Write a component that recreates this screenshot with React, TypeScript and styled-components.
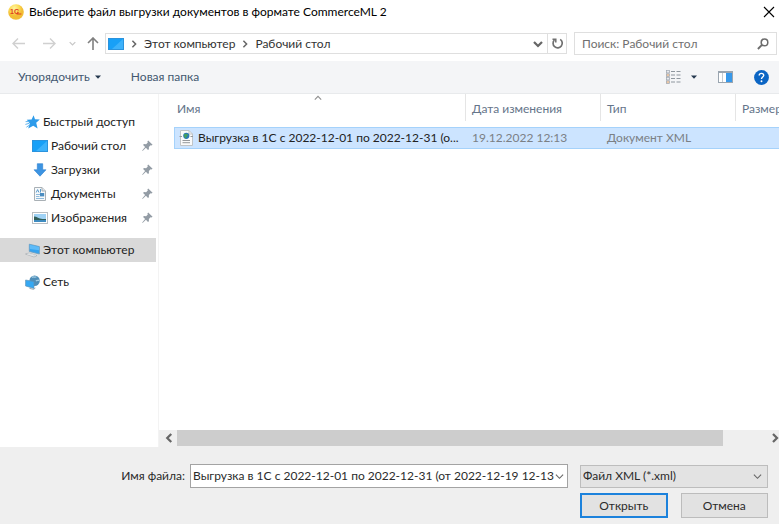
import React from "react";
import styled, { createGlobalStyle } from "styled-components";

const GlobalStyle = createGlobalStyle`
  * { box-sizing: border-box; }
  body { margin: 0; background: #fff; }
  body, button, input, select {
    font-family: Lato, "Noto Sans", sans-serif;
    font-size: 12px;
    line-height: 16px;
    color: #2b2b2b;
  }
  svg { display: block; flex: none; }
`;

const Dialog = styled.div`
  display: flex;
  flex-direction: column;
  min-height: 100vh;
  overflow: hidden;
`;

const PlainButton = styled.button`
  display: flex;
  align-items: center;
  justify-content: center;
  padding: 0;
  border: 0;
  background: none;
  cursor: default;
`;

const TitleBar = styled.header`
  display: flex;
  align-items: center;
  gap: 5px;
  height: 24px;
  padding: 0 4px 0 8px;
`;

const Title = styled.h1`
  flex: 1;
  margin: 0;
  font-size: 12px;
  font-weight: 400;
  color: #000;
  white-space: nowrap;
`;

const NavBar = styled.nav`
  display: flex;
  align-items: center;
  height: 37px;
  padding: 2px 2px 0 12px;
`;

const NavButton = styled(PlainButton)<{ $width: number }>`
  width: ${(p) => p.$width}px;
  height: 20px;
  justify-content: flex-start;
`;

const AddressBar = styled.div`
  display: flex;
  align-items: center;
  flex: 1;
  min-width: 0;
  height: 21px;
  border: 1px solid #dfdfdf;
  padding-left: 2px;
`;

const Crumb = styled(PlainButton)`
  color: #333;
  white-space: nowrap;
`;

const CrumbArrow = styled.span`
  padding: 0 6px 0 6px;
`;

const AddressSpacer = styled.span`
  flex: 1;
`;

const AddressAction = styled(PlainButton)<{ $divided?: boolean }>`
  width: 19px;
  height: 19px;
  border-left: ${(p) => (p.$divided ? "1px solid #dfdfdf" : "0")};
`;

const SearchBox = styled.label`
  display: flex;
  align-items: center;
  width: 203px;
  height: 23px;
  margin-left: 7px;
  padding: 0 7px;
  border: 1px solid #dfdfdf;
`;

const SearchInput = styled.input`
  flex: 1;
  min-width: 0;
  padding: 0;
  border: 0;
  outline: 0;
  background: none;
  &::placeholder { color: #707070; opacity: 1; }
`;

const Toolbar = styled.div`
  display: flex;
  align-items: center;
  height: 33px;
  padding: 0 10px 0 18px;
  background: #f4f5f7;
  border-bottom: 1px solid #e8eaec;
`;

const ToolbarButton = styled(PlainButton)`
  gap: 5px;
  margin-right: 30px;
  color: #435870;
`;

const ToolbarIcons = styled.div`
  display: flex;
  align-items: center;
  gap: 21px;
  margin-left: auto;
`;

const ViewButton = styled(PlainButton)`
  gap: 10px;
`;

const Main = styled.div`
  display: flex;
  flex: 1;
`;

const Sidebar = styled.aside`
  width: 159px;
  flex: none;
  padding: 16px 2px 0 0;
  border-right: 1px solid #f3f3f3;
`;

const TreeList = styled.ul`
  margin: 0 0 8px;
  padding: 0;
  list-style: none;
`;

const TreeItem = styled.li<{ $nested?: boolean; $selected?: boolean }>`
  display: flex;
  align-items: center;
  gap: 3px;
  height: 24px;
  padding: 0 3px 0 ${(p) => (p.$nested ? 32 : 25)}px;
  background: ${(p) => (p.$selected ? "#d9d9d9" : "transparent")};
`;

const TreeLink = styled.a`
  flex: 1;
  color: #222;
  text-decoration: none;
  white-space: nowrap;
`;

const FilePane = styled.section`
  display: flex;
  flex-direction: column;
  flex: 1;
  min-width: 0;
  overflow: hidden;
`;

const TableArea = styled.div`
  flex: 1;
  overflow: hidden;
  padding-left: 15px;
`;

const FileTable = styled.table`
  width: 100%;
  min-width: 660px;
  table-layout: fixed;
  border-collapse: separate;
  border-spacing: 0;
  tbody::before { content: ""; display: block; height: 6px; }
`;

const HeadCell = styled.th<{ $width?: number; $first?: boolean }>`
  width: ${(p) => (p.$width ? `${p.$width}px` : "auto")};
  height: 27px;
  padding: 2px 0 0 ${(p) => (p.$first ? 3 : 6)}px;
  border-right: 1px solid #e5e5e5;
  position: relative;
  text-align: left;
  font-weight: 400;
  color: #65758a;
`;

const SortMark = styled.span`
  position: absolute;
  top: 0;
  left: 0;
  right: 4px;
  display: flex;
  justify-content: center;
`;

const FileCell = styled.td<{ $first?: boolean }>`
  height: 22px;
  padding: 0 0 0 ${(p) => (p.$first ? 4 : 6)}px;
  background: #cce4ff;
  border: solid #a5d2fb;
  border-width: 1px 0 1px ${(p) => (p.$first ? 1 : 0)}px;
  color: ${(p) => (p.$first ? "#222" : "#7b8085")};
  white-space: nowrap;
`;

const FileName = styled.span`
  display: flex;
  align-items: center;
  gap: 4px;
`;

const ScrollBar = styled.div`
  display: flex;
  height: 17px;
  padding: 0 0 1px 1px;
  background: #efefef;
`;

const ScrollButton = styled(PlainButton)<{ $width: number }>`
  width: ${(p) => p.$width}px;
  flex: none;
`;

const ScrollTrack = styled.div`
  flex: 1;
`;

const ScrollThumb = styled.div`
  width: 92%;
  height: 16px;
  background: #cdcdcd;
`;

const Footer = styled.form`
  display: grid;
  grid-template-columns: 185px 1fr 188px;
  column-gap: 5px;
  row-gap: 5px;
  align-items: center;
  padding: 17px 11px 6px 0;
  background: #efefef;
`;

const FieldLabel = styled.label`
  text-align: right;
  white-space: nowrap;
`;

const NameCombo = styled.div`
  display: flex;
  height: 24px;
  margin-right: 7px;
  border: 1px solid #a3a3a3;
  background: #fff;
`;

const NameInput = styled.input`
  flex: 1;
  min-width: 0;
  padding: 0 0 0 2px;
  border: 0;
  outline: 0;
  background: none;
`;

const ComboButton = styled(PlainButton)`
  width: 12px;
  justify-content: flex-start;
`;

const SelectBox = styled.div`
  display: grid;
  align-items: center;
  height: 23px;
  border: 1px solid #bdbdbd;
  background: #e3e3e3;
  & > * { grid-area: 1 / 1; }
  & > svg { justify-self: end; margin-right: 5px; pointer-events: none; }
`;

const TypeSelect = styled.select`
  appearance: none;
  width: 100%;
  height: 20px;
  padding: 0 18px 0 2px;
  border: 0;
  outline: 0;
  background: none;
`;

const Actions = styled.div`
  grid-column: 3;
  display: grid;
  grid-template-columns: 1fr 1fr;
  gap: 13px;
`;

const ActionButton = styled.button<{ $primary?: boolean }>`
  height: 25px;
  padding: 0;
  border: ${(p) => (p.$primary ? "2px solid #1c82dc" : "1px solid #bcbcbc")};
  background: #e2e2e2;
`;

function Chevron({ dir, size = 8, color = "#666", weight = 1.5 }: { dir: "left" | "right" | "down" | "up"; size?: number; color?: string; weight?: number }) {
  const d = {
    left: "M5.8 0.8 2.6 4 5.8 7.2",
    right: "M2.4 0.8 5.6 4 2.4 7.2",
    down: "M0.8 2.4 4 5.6 7.2 2.4",
    up: "M0.8 5.6 4 2.4 7.2 5.6",
  }[dir];
  return (
    <svg width={size} height={size} viewBox="0 0 8 8" fill="none" stroke={color} strokeWidth={weight}>
      <path d={d} />
    </svg>
  );
}

const LogoText = styled.text`
  font-family: "Liberation Sans", sans-serif;
  font-size: 7px;
  font-weight: 700;
`;

const AppLogo = () => (
  <svg width="16" height="16" viewBox="0 0 16 16">
    <defs>
      <radialGradient id="logo" cx="40%" cy="25%">
        <stop offset="0" stopColor="#fff3a0" />
        <stop offset="0.6" stopColor="#fcdc55" />
        <stop offset="1" stopColor="#f2bd35" />
      </radialGradient>
    </defs>
    <circle cx="8" cy="8" r="7.8" fill="url(#logo)" />
    <LogoText x="2" y="10" fill="#e0401f">1С</LogoText>
    <path d="M8.5 10H13.4M9 8.2H10.4" stroke="#e0401f" strokeWidth="1.1" />
  </svg>
);

const Arrow = ({ dir, color }: { dir: "left" | "right" | "up"; color: string }) => (
  <svg width="13" height="13" viewBox="0 0 13 13" fill="none" stroke={color} strokeWidth="1.4">
    {dir === "left" && <path d="M13 6.5H1M6 1.5 1 6.5 6 11.5" />}
    {dir === "right" && <path d="M0 6.5H12M7 1.5 12 6.5 7 11.5" />}
    {dir === "up" && <path d="M6 13V1M1 6 6 1 11 6" strokeWidth="1.6" />}
  </svg>
);

const DesktopIcon = () => (
  <svg width="16" height="12" viewBox="0 0 16 12">
    <rect x="0.5" y="0.5" width="15" height="11" fill="#18a0f7" stroke="#2b93dd" />
    <path d="M15 1V11H4Z" fill="#3db2fb" />
  </svg>
);

const StarIcon = () => (
  <svg width="15" height="14" viewBox="0 0 15 14">
    <path d="M8.6 0.2 10 4.2 14.8 4.6 11.2 7.8 12.6 13.4 8.2 10.8 3.2 13.6 4.8 8.6 1.8 4.8 6.6 4.4Z" fill="#2d9bea" />
    <path d="M0.4 9.4 4 8.4M1.4 12.2 4.6 10M0.6 6.6 4.5 6.6" stroke="#62b5ef" strokeWidth="1" />
  </svg>
);

const DownloadIcon = () => (
  <svg width="16" height="14" viewBox="0 0 16 14">
    <path d="M5.3 0.7H10.7V6.8H14L8 13.2 2 6.8H5.3Z" fill="#3d94e2" stroke="#2a7fd0" strokeWidth="0.6" />
  </svg>
);

const DocumentIcon = () => (
  <svg width="16" height="16" viewBox="0 0 16 16">
    <path d="M2.5 1.5H10L13.5 5V14.5H2.5Z" fill="#f6f9fb" stroke="#a9b0b5" />
    <path d="M10 1.5V5H13.5" fill="#dde3e8" stroke="#a9b0b5" />
    <path d="M4.2 6.5 5.6 3.6 7 6.5M8.5 3V6.5" fill="none" stroke="#5a9bcb" />
    <path d="M4 8.5H8M4 10.5H7.5M4 12.5H12" stroke="#8fbbdc" />
    <rect x="8" y="7" width="4.2" height="3.4" fill="#4a8cc0" />
  </svg>
);

const PictureIcon = () => (
  <svg width="16" height="12" viewBox="0 0 16 12">
    <rect x="0.5" y="0.5" width="15" height="11" fill="#fff" stroke="#b9bec2" />
    <rect x="2" y="2" width="12" height="8" fill="#9fd2f5" />
    <path d="M2 4.4C5 4.4 6 6.2 9 6.7 11 7 12 6.8 14 7V8H2Z" fill="#315e58" />
    <rect x="2" y="8" width="12" height="2" fill="#3f8cc0" />
  </svg>
);

const ComputerIcon = () => (
  <svg width="15" height="15" viewBox="0 0 15 15">
    <path d="M4.3 1.2 14.4 3.6V11L4.3 8.4Z" fill="#35a3ef" stroke="#6c9ec0" strokeWidth="0.8" />
    <path d="M4.8 1.8 14 4V7.2L4.8 6Z" fill="#5ebbf8" />
    <path d="M0.5 11 4 10 12 12.6 9 14Z" fill="#c6ccd0" stroke="#a2a9ae" strokeWidth="0.6" />
    <path d="M2 11 9.5 13.2M3.4 10.4 11 12.6" stroke="#fff" strokeWidth="0.5" />
  </svg>
);

const NetworkIcon = () => (
  <svg width="15" height="15" viewBox="0 0 15 15">
    <circle cx="9.6" cy="5.8" r="5.2" fill="#4f8eb8" />
    <path d="M7 2.4C8.5 1 9.5 3 11.4 1.8M11 6C12 4.8 13 6 14.2 5" stroke="#a4cde4" strokeWidth="1.3" fill="none" />
    <path d="M0.6 5 9 6.6V13.4L0.6 11Z" fill="#35a8f3" stroke="#5f94b8" strokeWidth="0.7" />
    <path d="M4.5 13.4 8.6 14.3 10.4 13" fill="none" stroke="#98a5ae" />
  </svg>
);

const PinIcon = () => (
  <svg width="11" height="12" viewBox="0 0 11 12">
    <path d="M6.2 0.4 10.6 4.8 9.4 5.6 8.6 5.3 6.9 7 6.9 9.2 6 9.9 3.9 7.8 0.6 10.9 0.2 10.5 3.1 7 1.1 5 1.9 4.1 4.1 4.2 5.8 2.4 5.4 1.4Z" fill="#939ca5" />
  </svg>
);

const RefreshIcon = () => (
  <svg width="13" height="13" viewBox="0 0 13 13" fill="none" stroke="#707070" strokeWidth="1.7">
    <path d="M9.2 2.4A4.6 4.6 0 1 1 3.4 3" />
    <path d="M1.5 2.2H4.8V5.4" strokeWidth="1.5" />
  </svg>
);

const SearchIcon = () => (
  <svg width="12" height="12" viewBox="0 0 12 12" fill="none" stroke="#6c6c6c">
    <circle cx="7.5" cy="4.4" r="3.3" strokeWidth="1.5" />
    <path d="M5 6.9 0.9 11" strokeWidth="1.9" />
  </svg>
);

const CaretIcon = () => (
  <svg width="6" height="4" viewBox="0 0 6 4">
    <path d="M0 0.5H6L3 3.7Z" fill="#24384f" />
  </svg>
);

const ListViewIcon = () => (
  <svg width="15" height="14" viewBox="0 0 15 14">
    {[0, 3.5, 7, 10.5].map((y, i) => (
      <g key={y}>
        <rect x="0.4" y={y + 0.3} width="3" height="2.6" fill={i % 2 ? "#ecc7a6" : "#e8eaee"} stroke="#9da5af" strokeWidth="0.7" />
        <path d={`M5 ${y + 1.5}H9M10.5 ${y + 1.5}H14.5`} stroke="#8e969e" />
      </g>
    ))}
  </svg>
);

const PreviewPaneIcon = () => (
  <svg width="15" height="12" viewBox="0 0 15 12">
    <rect x="0.5" y="0.5" width="14" height="11" fill="#fff" stroke="#9aa5b0" />
    <path d="M0 1H15" stroke="#9aa5b0" strokeWidth="2" />
    <path d="M4.5 2V11" stroke="#c5ccd2" />
    <rect x="8" y="2" width="6" height="9" fill="#3798ea" />
  </svg>
);

const HelpIcon = () => (
  <svg width="15" height="15" viewBox="0 0 15 15">
    <circle cx="7.5" cy="7.5" r="7.4" fill="#0b65c4" />
    <path d="M5.2 5.5C5.3 2.6 9.9 2.8 9.7 5.5 9.5 7.1 7.5 7.1 7.5 9" fill="none" stroke="#fff" strokeWidth="1.4" />
    <circle cx="7.5" cy="11.2" r="0.95" fill="#fff" />
  </svg>
);

const XmlIcon = () => (
  <svg width="15" height="16" viewBox="0 0 15 16">
    <path d="M1.5 0.5H10L13.5 4V15.5H1.5Z" fill="#fafafa" stroke="#c0c4c7" />
    <path d="M10 0.5V4H13.5" fill="none" stroke="#c0c4c7" />
    <circle cx="7.3" cy="5.8" r="3.1" fill="#2c78b6" />
    <path d="M5 4.5C7 2.6 7.5 5 9 4.2 9 6 7 6 7 8.5 5.5 8 5 6 5 4.5Z" fill="#45a15b" />
    <path d="M0.5 6.5H3M11.5 6.5H14M3.5 10.5H11M3.5 12.7H11" stroke="#96999c" />
  </svg>
);

const CloseIcon = () => (
  <svg width="12" height="12" viewBox="0 0 12 12" stroke="#000" strokeWidth="1.1">
    <path d="M1 1 11 11M11 1 1 11" />
  </svg>
);

const quickAccess = [
  { name: "Рабочий стол", Icon: DesktopIcon },
  { name: "Загрузки", Icon: DownloadIcon },
  { name: "Документы", Icon: DocumentIcon },
  { name: "Изображения", Icon: PictureIcon },
];

export default function App() {
  return (
    <>
      <GlobalStyle />
      <Dialog role="dialog" aria-labelledby="dialog-title">
        <TitleBar>
          <AppLogo />
          <Title id="dialog-title">Выберите файл выгрузки документов в формате CommerceML 2</Title>
          <PlainButton type="button" aria-label="Закрыть"><CloseIcon /></PlainButton>
        </TitleBar>

        <NavBar>
          <NavButton $width={31} type="button" aria-label="Назад"><Arrow dir="left" color="#d0d0d0" /></NavButton>
          <NavButton $width={26} type="button" aria-label="Вперёд"><Arrow dir="right" color="#d0d0d0" /></NavButton>
          <NavButton $width={18} type="button" aria-label="Последние места"><Chevron dir="down" size={7} color="#c8c8c8" /></NavButton>
          <NavButton $width={18} type="button" aria-label="Вверх"><Arrow dir="up" color="#808080" /></NavButton>
          <AddressBar>
            <DesktopIcon />
            <CrumbArrow><Chevron dir="right" /></CrumbArrow>
            <Crumb type="button">Этот компьютер</Crumb>
            <CrumbArrow><Chevron dir="right" /></CrumbArrow>
            <Crumb type="button">Рабочий стол</Crumb>
            <AddressSpacer />
            <AddressAction type="button" aria-label="Предыдущие расположения"><Chevron dir="down" size={10} weight={1.8} /></AddressAction>
            <AddressAction $divided type="button" aria-label="Обновить"><RefreshIcon /></AddressAction>
          </AddressBar>
          <SearchBox>
            <SearchInput type="text" aria-label="Поиск" placeholder="Поиск: Рабочий стол" />
            <SearchIcon />
          </SearchBox>
        </NavBar>

        <Toolbar>
          <ToolbarButton type="button">Упорядочить <CaretIcon /></ToolbarButton>
          <ToolbarButton type="button">Новая папка</ToolbarButton>
          <ToolbarIcons>
            <ViewButton type="button" aria-label="Вид"><ListViewIcon /><CaretIcon /></ViewButton>
            <PlainButton type="button" aria-label="Область просмотра"><PreviewPaneIcon /></PlainButton>
            <PlainButton type="button" aria-label="Справка"><HelpIcon /></PlainButton>
          </ToolbarIcons>
        </Toolbar>

        <Main>
          <Sidebar>
            <TreeList>
              <TreeItem><StarIcon /><TreeLink href="#quick">Быстрый доступ</TreeLink></TreeItem>
              {quickAccess.map(({ name, Icon }) => (
                <TreeItem key={name} $nested>
                  <Icon /><TreeLink href="#folder">{name}</TreeLink><PinIcon />
                </TreeItem>
              ))}
            </TreeList>
            <TreeList>
              <TreeItem $selected><ComputerIcon /><TreeLink href="#computer">Этот компьютер</TreeLink></TreeItem>
            </TreeList>
            <TreeList>
              <TreeItem><NetworkIcon /><TreeLink href="#network">Сеть</TreeLink></TreeItem>
            </TreeList>
          </Sidebar>

          <FilePane>
            <TableArea>
              <FileTable>
                <thead>
                  <tr>
                    <HeadCell $width={292} $first>Имя<SortMark><Chevron dir="up" color="#909090" weight={1.1} /></SortMark></HeadCell>
                    <HeadCell $width={135}>Дата изменения</HeadCell>
                    <HeadCell $width={135}>Тип</HeadCell>
                    <HeadCell>Размер</HeadCell>
                  </tr>
                </thead>
                <tbody>
                  <tr>
                    <FileCell $first><FileName><XmlIcon />Выгрузка в 1С с 2022-12-01 по 2022-12-31 (о...</FileName></FileCell>
                    <FileCell>19.12.2022 12:13</FileCell>
                    <FileCell>Документ XML</FileCell>
                    <FileCell />
                  </tr>
                </tbody>
              </FileTable>
            </TableArea>
            <ScrollBar>
              <ScrollButton $width={17} type="button" aria-label="Прокрутить влево"><Chevron dir="left" size={10} weight={1.8} /></ScrollButton>
              <ScrollTrack><ScrollThumb /></ScrollTrack>
              <ScrollButton $width={8} type="button" aria-label="Прокрутить вправо"><Chevron dir="right" size={10} weight={1.8} /></ScrollButton>
            </ScrollBar>
          </FilePane>
        </Main>

        <Footer onSubmit={(e) => e.preventDefault()}>
          <FieldLabel htmlFor="file-name">Имя файла:</FieldLabel>
          <NameCombo>
            <NameInput id="file-name" type="text" defaultValue="Выгрузка в 1С с 2022-12-01 по 2022-12-31 (от 2022-12-19 12-13" />
            <ComboButton type="button" aria-label="Недавние имена"><Chevron dir="down" size={9} weight={1} /></ComboButton>
          </NameCombo>
          <SelectBox>
            <TypeSelect aria-label="Тип файла">
              <option>Файл XML (*.xml)</option>
            </TypeSelect>
            <Chevron dir="down" size={9} weight={1} />
          </SelectBox>
          <Actions>
            <ActionButton $primary type="submit">Открыть</ActionButton>
            <ActionButton type="button">Отмена</ActionButton>
          </Actions>
        </Footer>
      </Dialog>
    </>
  );
}
